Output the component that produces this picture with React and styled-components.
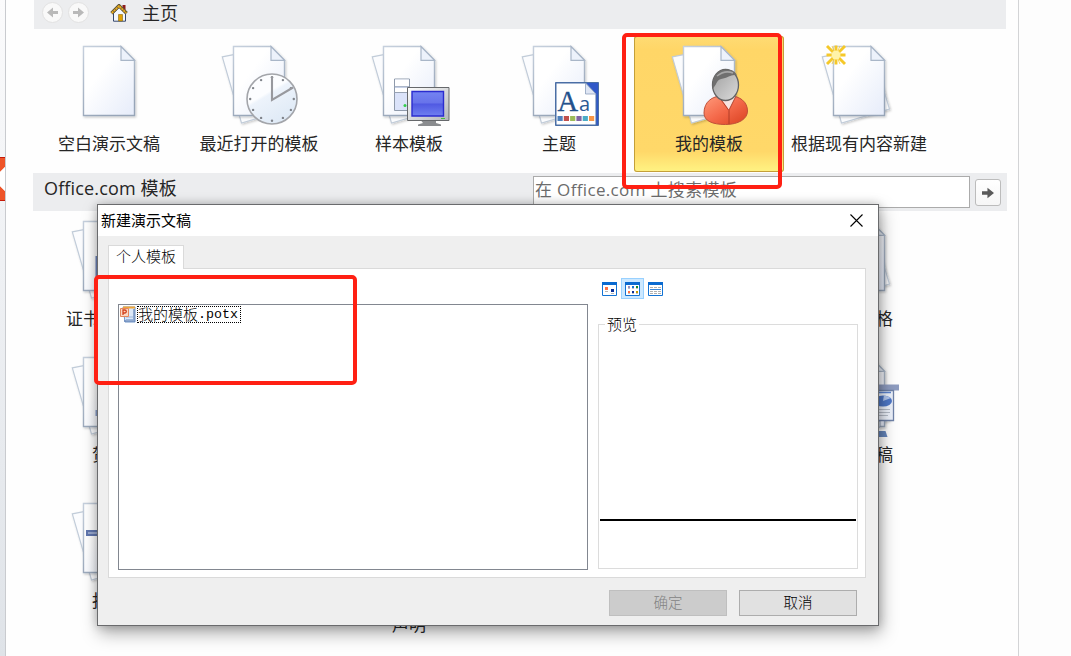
import React from "react";
import styled, { createGlobalStyle } from "styled-components";

const ui = '"Open Sans", "Noto Sans CJK SC", sans-serif';

const Global = createGlobalStyle`
  body { margin: 0; background: #fdfdfd; font-family: ${ui}; color: #262626; overflow: hidden; }
  * { box-sizing: border-box; }
  svg { display: block; }
`;

const Shell = styled.div`
  position: relative;
  display: flex;
  width: 1071px;
  height: 656px;
  overflow: hidden;
`;
const Rail = styled.aside`
  flex: 0 0 6px;
  min-width: 0;
  overflow: hidden;
  border-right: 1px solid #c9cbcf;
  background: linear-gradient(#fbfbfc, #eff1f4 40%, #dfe3e8);
  padding-top: 157px;
`;
const Main = styled.main`
  flex: 0 0 1013px;
  height: 656px;
  padding-left: 27px;
  border-right: 1px solid #d3d4d6;
  background: #fefefe;
`;
const NavBar = styled.nav`
  display: flex;
  align-items: center;
  width: 972px;
  height: 29px;
  margin-left: 1px;
  padding: 0 0 4px 8px;
  background: #ecedef;
  font-size: 18px;
`;
const NavTitle = styled.span`
  margin-left: 13px;
  line-height: 24px;
`;
const Round = styled.span`
  display: grid;
  place-items: center;
  width: 21px;
  height: 21px;
  margin-right: 5px;
  border: 1px solid #e2e2e2;
  border-radius: 50%;
  background: #f9f9f9;
`;
const HomeSlot = styled.span`
  margin: 1px 0 0 16px;
`;
const Grid = styled.div`
  display: grid;
  grid-template-columns: repeat(6, 150px);
  grid-template-rows: ${(p) => p.$rows};
  margin: ${(p) => p.$gap} 0 0 1px;
`;
const Cell = styled.div`
  display: flex;
  flex-direction: column;
  align-items: center;
  border-radius: 3px;
  background: ${(p) => (p.$on ? "linear-gradient(#fedb74 0, #ffd667 10%, #ffd869 85%, #fff080 98%)" : "none")};
  box-shadow: ${(p) => (p.$on ? "inset 0 0 0 1px #c39f3a" : "none")};
`;
const Label = styled.div`
  width: 150px;
  margin-top: 6px;
  padding-left: ${(p) => Math.max(p.$shift || 0, 0)}px;
  padding-right: ${(p) => Math.max(-(p.$shift || 0), 0)}px;
  font-size: 17px;
  line-height: 24px;
  text-align: center;
  white-space: pre;
`;
const OfficeBar = styled.div`
  display: flex;
  width: 974px;
  height: 38px;
  margin-top: 1px;
  padding: 3px 6px 3px 11px;
  background: #ecedef;
`;
const OfficeTitle = styled.div`
  width: 489px;
  font-size: 18px;
  line-height: 24px;
  letter-spacing: 0.15px;
`;
const Search = styled.div`
  width: 437px;
  height: 32px;
  padding-left: 1px;
  border: 1px solid #ababab;
  background: #fff;
  color: #6c6c6c;
  font-size: 17px;
  line-height: 25px;
  letter-spacing: 0.34px;
  white-space: nowrap;
`;
const Go = styled.div`
  display: grid;
  place-items: center;
  width: 26px;
  height: 27px;
  margin: 3px 0 0 5px;
  border: 1px solid #bcbcbc;
  border-radius: 3px;
  background: linear-gradient(#fff, #f6f6f6);
`;

const Dialog = styled.section`
  position: absolute;
  left: 97px;
  top: 204px;
  width: 782px;
  height: 422px;
  border: 1px solid #6a6b6d;
  background: #efefef;
  color: #000;
  font-size: 15px;
  box-shadow: 2px 7px 16px rgba(0, 0, 0, 0.34), 0 0 9px rgba(0, 0, 0, 0.2);
`;
const TitleBar = styled.header`
  display: flex;
  justify-content: space-between;
  height: 31px;
  padding: 9px 15px 0 3px;
  background: #fff;
`;
const DialogTitle = styled.span`
  margin-top: -6px;
  line-height: 24px;
`;
const TabStrip = styled.div`
  height: 32px;
  padding: 9px 0 0 10px;
`;
const Tab = styled.div`
  position: relative;
  z-index: 1;
  width: 76px;
  height: 24px;
  border: 1px solid #dadada;
  border-bottom: 0;
  background: #fff;
  line-height: 20px;
  text-align: center;
  font-weight: 300;
`;
const Panel = styled.div`
  display: flex;
  width: 758px;
  height: 310px;
  margin-left: 10px;
  padding: 9px 7px 7px 9px;
  border: 1px solid #dadada;
  background: #fff;
`;
const FileList = styled.div`
  width: 470px;
  height: 266px;
  margin: 26px 10px 0 0;
  padding: 1px;
  border: 1px solid #828790;
`;
const FileRow = styled.div`
  display: flex;
  align-items: flex-start;
  height: 18px;
`;
const FileName = styled.span`
  display: flex;
  height: 17px;
  width: 104px;
  margin-left: 1px;
  border: 1px dotted #000;
  font: 300 15px/13px "Noto Sans CJK SC", sans-serif;
  white-space: nowrap;
`;
const Ext = styled.span`
  font: 13.3px/15px "Liberation Mono", monospace;
`;
const Side = styled.div`
  width: 260px;
`;
const Views = styled.div`
  display: flex;
  align-items: center;
  height: 21px;
`;
const ViewButton = styled.span`
  display: grid;
  place-items: center;
  width: 23px;
  height: 21px;
  border: 1px solid ${(p) => (p.$on ? "#99d1ff" : "transparent")};
  background: ${(p) => (p.$on ? "#cce8ff" : "none")};
`;
const Preview = styled.fieldset`
  width: 260px;
  height: 256px;
  margin: 14px 0 0;
  padding: 0 1px;
  border: 1px solid #dcdcdc;
`;
const Legend = styled.legend`
  margin-left: 5px;
  padding: 0 2px;
  font-weight: 300;
  line-height: 22px;
`;
const Rule = styled.div`
  height: 2px;
  margin-top: 184px;
  background: #000;
`;
const Footer = styled.footer`
  display: flex;
  justify-content: flex-end;
  gap: 12px;
  padding: 12px 21px 0 0;
`;
const Button = styled.div`
  width: 118px;
  height: 26px;
  border: 1px solid ${(p) => (p.$off ? "#bfbfbf" : "#adadad")};
  background: ${(p) => (p.$off ? "#cccccc" : "#e1e1e1")};
  color: ${(p) => (p.$off ? "#838383" : "#000")};
  font-size: 14.5px;
  font-weight: 300;
  line-height: 23px;
  text-align: center;
`;
const Mark = styled.div`
  position: absolute;
  left: ${(p) => p.$x}px;
  top: ${(p) => p.$y}px;
  width: ${(p) => p.$w}px;
  height: ${(p) => p.$h}px;
  border: 4px solid #ff2013;
  border-radius: 5px;
`;

const Arrow = ({ flip, color = "#b9b9b9", size = 11 }) => (
  <svg width={size} height={size} viewBox="0 0 11 11" transform={flip ? "scale(-1 1)" : undefined}>
    <path d="M0 4h5V0.6L11 5.5 5 10.4V7H0z" fill={color} />
  </svg>
);

const Home = () => (
  <svg width="19" height="18" viewBox="0 0 19 18">
    <path d="M12.5 1h3v6h-3z" fill="#8e1c1c" />
    <path d="M3.5 9L9.5 3l6 6v8.2h-12z" fill="#f4f7fd" stroke="#34466b" />
    <path d="M8.5 10.5h4v6.5h-4z" fill="#e2a100" stroke="#8c6a10" strokeWidth=".6" />
    <path d="M1.5 9.2L9 1.7l7.6 7.5" fill="none" stroke="#5a5038" strokeWidth="3.4" />
    <path d="M1.8 9L9 2l7.3 7" fill="none" stroke="#e9ac1d" strokeWidth="1.9" strokeDasharray="2.2 .5" />
  </svg>
);

const Defs = () => (
  <defs>
    <linearGradient id="paper" x1="0" y1="0" x2="1" y2="1">
      <stop offset=".35" stopColor="#fff" />
      <stop offset="1" stopColor="#e6ecfa" />
    </linearGradient>
    <linearGradient id="edge" x1="0" y1="0" x2="0.4" y2="1">
      <stop offset="0" stopColor="#c6d0dd" />
      <stop offset="1" stopColor="#97a5b8" />
    </linearGradient>
    <linearGradient id="metal" x1="0" y1="0" x2="1" y2="1">
      <stop offset="0" stopColor="#fff" />
      <stop offset="1" stopColor="#b3b6ba" />
    </linearGradient>
    <linearGradient id="face" x1="0" y1="0" x2="1" y2="1">
      <stop offset="0" stopColor="#9e9e9e" />
      <stop offset="1" stopColor="#dcdcdc" />
    </linearGradient>
    <linearGradient id="body" x1="0" y1="0" x2="1" y2="1">
      <stop offset="0" stopColor="#ff9b7c" />
      <stop offset=".5" stopColor="#f4694a" />
      <stop offset="1" stopColor="#d9401f" />
    </linearGradient>
    <linearGradient id="screen" x1="0" y1="0" x2="0" y2="1">
      <stop offset="0" stopColor="#7484f2" />
      <stop offset=".48" stopColor="#6772ea" />
      <stop offset=".5" stopColor="#4f58e2" />
      <stop offset="1" stopColor="#6f80f0" />
    </linearGradient>
    <linearGradient id="dial" x1="0" y1="0" x2=".6" y2="1">
      <stop offset=".45" stopColor="#fcfdff" />
      <stop offset=".5" stopColor="#edf3fb" />
      <stop offset="1" stopColor="#dfeaf6" />
    </linearGradient>
    <filter id="soft" x="-20%" y="-20%" width="150%" height="150%">
      <feDropShadow dx="1" dy="1.2" stdDeviation="1" floodOpacity=".22" />
    </filter>
  </defs>
);

const badges = {
  clock: (
    <g>
      <circle cx="88" cy="63" r="25" fill="url(#dial)" stroke="#a3a5aa" strokeWidth="1.6" />
      {Array.from({ length: 12 }, (_, i) => (
        <circle key={i} cx={88 + 21.8 * Math.sin((i * Math.PI) / 6)} cy={63 - 21.8 * Math.cos((i * Math.PI) / 6)} r="1.2" fill="#80848b" />
      ))}
      <path d="M88 40v24l21-12.5" fill="none" stroke="#98999e" strokeWidth="2.1" />
    </g>
  ),
  pc: (
    <g>
      <path d="M60.5 43h15v31.5h-15z" fill="#dbe3fa" stroke="#8f9aab" />
      <path d="M61 43.5h14v6.5H61zM61 52h14v4H61z" fill="#fff" />
      <path d="M60.5 50.8h15M60.5 56.5h15" stroke="#98a3b4" />
      <circle cx="71" cy="69.5" r="1.5" fill="#35cf4c" />
      <path d="M87 84.500h15v2.500l5 1.500v1.500H84v-1.500l5-1.500z" fill="#8a8c8f" />
      <path d="M73.500 51.500h41.500v33h-41.500z" fill="url(#metal)" stroke="#66686b" />
      <path d="M78 55.500h31.500v24.500H78z" fill="url(#screen)" stroke="#2b2ccf" strokeWidth="1.400" />
      <path d="M107 82.500h4" stroke="#49b944" />
    </g>
  ),
  theme: (
    <g>
      <path d="M71.500 46.500h43v43h-43z" fill="#3159c8" stroke="#4a6fa5" />
      <path d="M72 47h29.500L112 58.500V89H72z" fill="#fff" stroke="#4a6fa5" />
      <path d="M101.500 47v11H112z" fill="#dfe6f4" stroke="#8d9fbd" strokeWidth=".8" />
      <text x="73.500" y="75" fontFamily="Liberation Serif, serif" fontSize="28.500" fill="#23518c" stroke="#23518c" strokeWidth=".3">A</text>
      <text x="95" y="75" fontFamily="Open Sans, sans-serif" fontSize="20" fill="#2b5a94">a</text>
      {["#4f81bd", "#c0504d", "#9bbb59", "#8064a2", "#4bacc6", "#f79646"].map((c, i) => (
        <path key={c} d={`M${73.5 + i * 6.3} 80h5.2v5h-5.2z`} fill={c} />
      ))}
    </g>
  ),
  user: (
    <g>
      <path d="M70 77c0-11 8-17 18-17h8c10 0 17.500 6 17.500 15 0 8-9 13.500-22 13.500S70 85 70 77z" fill="url(#body)" stroke="#bf5038" />
      <path d="M86 61l9 13 7-14z" fill="#f7e4e0" />
      <path d="M95 74v14M85 61l9.500 13M95 74l7-14" fill="none" stroke="#a93b27" strokeWidth=".9" />
      <ellipse cx="91.500" cy="49" rx="13" ry="15.500" fill="url(#face)" stroke="#636363" strokeWidth="1.300" />
      <path d="M78.600 53c-1-12 4-19.500 14-19.500 7 0 9 3 10.500 6-5-2-9 2-14 3-6 1-6 4-8 7z" fill="#6f6f6f" />
      <path d="M83 40c5-4 11-5 16-3" fill="none" stroke="#a6a6a6" strokeWidth="1.500" />
    </g>
  ),
  star: (
    <g>
      <g stroke="#f5c829" strokeWidth="2.900">
        <path d="M52 9.500v19M42.500 19h19M43 10l18 18M61 10L43 28" />
        <path d="M48 10l8 18M56 10l-8 18" strokeWidth=".8" />
      </g>
      <circle cx="52" cy="19" r="4.500" fill="#fff3a8" />
    </g>
  ),
  lines: (
    <g>
      <path d="M52 37h24v6H52z" fill="#6076ae" />
      <path d="M54 40h20" stroke="#d3dcf0" />
    </g>
  ),
  mark: <path d="M61.500 45h14v22h-14z" fill="#6f86bd" />,
  fold: <path d="M61.500 63h14v6h-14z" fill="#8ba0cc" />,
  board: (
    <g>
      <path d="M74 37.500h41v6H74z" fill="#8e9cc0" />
      <path d="M90 74h6v6h-6z" fill="#f4f6fb" stroke="#8d9bb3" />
      <path d="M78 43.500h31.500v30H78z" fill="#eef3fc" stroke="#6f82a8" strokeWidth="1.300" />
      <path d="M80 45.500h27" stroke="#5c84cf" strokeWidth="1.500" />
      <ellipse cx="99" cy="54" rx="9" ry="5.500" fill="#4e78c8" />
      <path d="M99 54l1-6 7 3z" fill="#b3c9f0" />
      <path d="M86 62.500h20M86 65.500h20M86 68.500h18" stroke="#b6bdc9" />
      <path d="M84 90h19.500l-2-6H84z" fill="#6687bd" />
    </g>
  ),
};

const Paper = ({ single, badge }) => (
  <svg width="150" height="90" viewBox="0 0 150 90" overflow="visible">
    <Defs />
    {!single && (
      <g filter="url(#soft)">
        <path d="M38.300 20.800L84 12l6 10 15.500 51L57.500 87z" fill="#fbfcfe" stroke="#c1ccd9" strokeWidth="1.200" />
      </g>
    )}
    <g filter="url(#soft)">
      <path d="M49.500 10.500h37.500L100.500 24v55.500h-51z" fill="url(#paper)" stroke="url(#edge)" strokeWidth="1.400" />
    </g>
    <path d="M87 10.500V24.300h13.500z" fill="#edf2fb" stroke="#a9b6c8" strokeWidth="1.200" />
    {badges[badge]}
  </svg>
);

const PptFile = () => (
  <svg width="16" height="17" viewBox="0 0 16 17">
    <path d="M3 1h12v15H5z" fill="#dce8f8" stroke="#6f93c6" />
    <path d="M3 .500h12v2H3z" fill="#f0a638" />
    <path d="M6 11h7M6 13.500h7" stroke="#9ab6dc" />
    <path d="M13 3h2v13H4v-2h9z" fill="#5d7fb4" opacity=".6" />
    <path d="M.500 2.500h8v8h-8z" fill="#fbd9c4" stroke="#e4875c" />
    <path d="M3 9V4h1.800a1.500 1.500 0 010 3H3" fill="none" stroke="#d2401c" strokeWidth="1.300" />
  </svg>
);

const ViewIcon = ({ kind }) => (
  <svg width="15" height="14" viewBox="0 0 15 14">
    <path d="M.500.500h14v13H.500z" fill="#fff" stroke="#1273d4" />
    <path d="M0 0h15v3H0z" fill="#0a6ad0" />
    {kind === 0 && (
      <g>
        <path d="M3 5h3v3H3z" fill="#ff7043" />
        <path d="M9 7h3v3H9z" fill="#0b2f96" />
        <path d="M3 9.500h3M9 11.500h3" stroke="#b5b5b5" />
      </g>
    )}
    {kind === 1 &&
      ["#9a8fc0", "#1273d4", "#118a2b", "#ff7043", "#0b2f96", "#c59a00"].map((c, i) => (
        <g key={c}>
          <path d={`M${3 + (i % 3) * 4} ${4 + Math.floor(i / 3) * 5}h2v2h-2z`} fill={c} />
          <path d={`M${3 + (i % 3) * 4} ${6.5 + Math.floor(i / 3) * 5}h2`} stroke="#c0c0c0" />
        </g>
      ))}
    {kind === 2 && (
      <g>
        <path d="M2 5.500h11M2 9.500h11M2 11.500h11" stroke="#b0b0b0" strokeDasharray="3 1" />
        <path d="M2 7.500h11" stroke="#3b87d6" />
      </g>
    )}
  </svg>
);

const starters = [
  { label: "空白演示文稿", single: true },
  { label: "最近打开的模板", badge: "clock" },
  { label: "样本模板", badge: "pc" },
  { label: "主题", badge: "theme" },
  { label: "我的模板", badge: "user", on: true },
  { label: "根据现有内容新建", badge: "star" },
];

const online = [
  { label: "证书", badge: "mark", shift: -52 }, null, null, null, null, { label: "表格", shift: 34 },
  { label: "贺卡", badge: "fold" }, null, null, null, null, { label: "演示文稿", badge: "board" },
  { label: "报表", badge: "lines" }, null, { label: "\n声明" }, null, null, null,
];

const Template = ({ item }) => (
  <Cell $on={item.on}>
    <Paper single={item.single} badge={item.badge} />
    <Label $shift={item.shift}>{item.label}</Label>
  </Cell>
);

export default function App() {
  return (
    <Shell>
      <Global />
      <Rail>
        <svg width="6" height="44" viewBox="0 0 6 44">
          <path d="M0 0h6v9L0 15zM0 29l6 6v9H0z" fill="#ee5428" />
          <path d="M0 .500h6M0 43.500h6" stroke="#c51a08" />
          <path d="M0 15l6-6v26l-6-6z" fill="#fff" />
        </svg>
      </Rail>
      <Main>
        <NavBar>
          <Round><Arrow flip /></Round>
          <Round><Arrow /></Round>
          <HomeSlot><Home /></HomeSlot>
          <NavTitle>主页</NavTitle>
        </NavBar>
        <Grid $rows="136px" $gap="7px">
          {starters.map((s) => <Template key={s.label} item={s} />)}
        </Grid>
        <OfficeBar>
          <OfficeTitle>Office.com 模板</OfficeTitle>
          <Search>在 Office.com 上搜索模板</Search>
          <Go><Arrow color="#5a5a5a" size={12} /></Go>
        </OfficeBar>
        <Grid $rows="136px 146px 146px" $gap="0">
          {online.map((o, i) => (o ? <Template key={i} item={o} /> : <Cell key={i} />))}
        </Grid>
      </Main>

      <Dialog>
        <TitleBar>
          <DialogTitle>新建演示文稿</DialogTitle>
          <svg width="13" height="13" viewBox="0 0 13 13">
            <path d="M.500.500l12 12M12.500.500l-12 12" stroke="#000" strokeWidth="1.100" />
          </svg>
        </TitleBar>
        <TabStrip><Tab>个人模板</Tab></TabStrip>
        <Panel>
          <FileList>
            <FileRow>
              <PptFile />
              <FileName><span>我的模板</span><Ext>.potx</Ext></FileName>
            </FileRow>
          </FileList>
          <Side>
            <Views>
              <ViewButton><ViewIcon kind={0} /></ViewButton>
              <ViewButton $on><ViewIcon kind={1} /></ViewButton>
              <ViewButton><ViewIcon kind={2} /></ViewButton>
            </Views>
            <Preview>
              <Legend>预览</Legend>
              <Rule />
            </Preview>
          </Side>
        </Panel>
        <Footer>
          <Button $off>确定</Button>
          <Button>取消</Button>
        </Footer>
      </Dialog>

      <Mark $x={622} $y={33} $w={160} $h={156} />
      <Mark $x={94} $y={275} $w={263} $h={110} />
    </Shell>
  );
}
